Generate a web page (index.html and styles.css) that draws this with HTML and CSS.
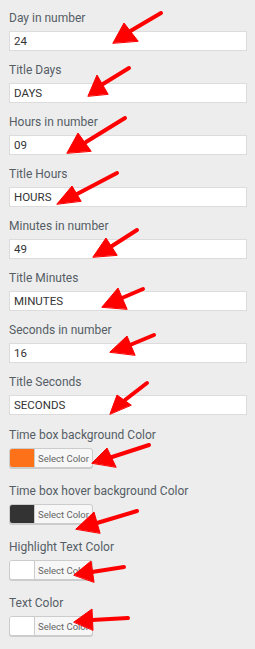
FILE: index.html
```html
<!DOCTYPE html>
<html lang="en">
<head>
<meta charset="UTF-8">
<meta name="viewport" content="width=device-width, initial-scale=1.0">
<title>Countdown settings</title>
<link rel="stylesheet" href="styles.css">
</head>
<body>
<div class="panel">
  <div class="field">
    <label class="label">Day in number</label>
    <input type="text" class="input" value="24">
  </div>
  <div class="field">
    <label class="label">Title Days</label>
    <input type="text" class="input" value="DAYS">
  </div>
  <div class="field">
    <label class="label">Hours in number</label>
    <input type="text" class="input" value="09">
  </div>
  <div class="field">
    <label class="label">Title Hours</label>
    <input type="text" class="input" value="HOURS">
  </div>
  <div class="field">
    <label class="label">Minutes in number</label>
    <input type="text" class="input" value="49">
  </div>
  <div class="field">
    <label class="label">Title Minutes</label>
    <input type="text" class="input" value="MINUTES">
  </div>
  <div class="field">
    <label class="label">Seconds in number</label>
    <input type="text" class="input" value="16">
  </div>
  <div class="field">
    <label class="label">Title Seconds</label>
    <input type="text" class="input" value="SECONDS">
  </div>

  <div class="field color-field">
    <label class="label">Time box background Color</label>
    <button class="color-btn"><span class="swatch orange"></span><span class="btn-text">Select Color</span></button>
  </div>
  <div class="field color-field">
    <label class="label">Time box hover background Color</label>
    <button class="color-btn"><span class="swatch dark"></span><span class="btn-text">Select Color</span></button>
  </div>
  <div class="field color-field">
    <label class="label">Highlight Text Color</label>
    <button class="color-btn"><span class="swatch white"></span><span class="btn-text">Select Color</span></button>
  </div>
  <div class="field color-field">
    <label class="label">Text Color</label>
    <button class="color-btn"><span class="swatch white"></span><span class="btn-text">Select Color</span></button>
  </div>
</div>

<!-- annotation arrows drawn over the form -->
<svg class="arrows" width="255" height="649" viewBox="0 0 255 649">
  <g stroke="#f00" stroke-width="4" stroke-linecap="round" fill="#f00">
    <line x1="161" y1="13" x2="127" y2="33"/>
    <polygon points="113,43 124,23 138,41" stroke-width="1"/>
    <line x1="129" y1="68" x2="103" y2="84"/>
    <polygon points="88,96 97,75 108,94" stroke-width="1"/>
    <line x1="125" y1="118" x2="86" y2="142"/>
    <polygon points="67,153 78,133 91,151" stroke-width="1"/>
    <line x1="117" y1="173" x2="77" y2="194"/>
    <polygon points="57,204 72,186 81,201" stroke-width="1"/>
    <line x1="137" y1="230" x2="112" y2="246"/>
    <polygon points="93,257 106,238 117,255" stroke-width="1"/>
    <line x1="143" y1="289" x2="122" y2="298"/>
    <polygon points="102,307 118,288 127,309" stroke-width="1"/>
    <line x1="154" y1="335" x2="130" y2="345"/>
    <polygon points="110,352 127,336 135,355" stroke-width="1"/>
    <line x1="147" y1="383" x2="125" y2="400"/>
    <polygon points="110,414 117,395 131,405" stroke-width="1"/>
    <line x1="149" y1="445" x2="112" y2="457"/>
    <polygon points="92,463 107,448 116,467" stroke-width="1"/>
    <line x1="137" y1="511" x2="97" y2="523"/>
    <polygon points="76,529 94,512 100,533" stroke-width="1"/>
    <line x1="124" y1="567" x2="92" y2="572"/>
    <polygon points="74,575 91,561 94,582" stroke-width="1"/>
    <line x1="128" y1="618" x2="92" y2="620"/>
    <polygon points="74,622 92,609 93,630" stroke-width="1"/>
  </g>
</svg>
</body>
</html>
```

FILE: styles.css
```css
body {
  margin: 0;
  background-color: #ededed;
  font-family: Roboto, 'Liberation Sans', sans-serif;
}
.panel {
  padding: 11px 8px 0 9px;
}
.field {
  display: flex;
  flex-direction: column;
  gap: 6px;
  margin-bottom: 12px;
}
.color-field {
  margin-bottom: 16px;
  align-items: flex-start;
}
.field:nth-child(8) {
  margin-bottom: 13px;
}
.label {
  font-size: 12px;
  line-height: 14px;
  color: #555d66;
}
.input {
  box-sizing: border-box;
  width: 100%;
  height: 20px;
  margin: 0;
  padding: 0 4px;
  border: 1px solid #dcdcdc;
  background-color: #fff;
  font-family: Roboto, 'Liberation Sans', sans-serif;
  font-size: 11.5px;
  color: #333;
  outline: none;
}
.color-btn {
  display: flex;
  align-items: stretch;
  box-sizing: border-box;
  height: 20px;
  width: 84px;
  padding: 0;
  margin: 0;
  border: 1px solid #ccc;
  border-radius: 3px;
  background-color: #f7f7f7;
  box-shadow: 0 1px 0 #ccc;
  overflow: hidden;
  cursor: pointer;
}
.swatch {
  width: 24px;
  border-right: 1px solid #ccc;
}
.swatch.orange { background-color: #fd7218; }
.swatch.dark { background-color: #333; }
.swatch.white { background-color: #fff; }
.btn-text {
  flex: 1;
  display: flex;
  align-items: center;
  justify-content: center;
  font-family: Roboto, 'Liberation Sans', sans-serif;
  font-size: 9.5px;
  color: #666;
}
.arrows {
  position: absolute;
  top: 0;
  left: 0;
  pointer-events: none;
}
```
